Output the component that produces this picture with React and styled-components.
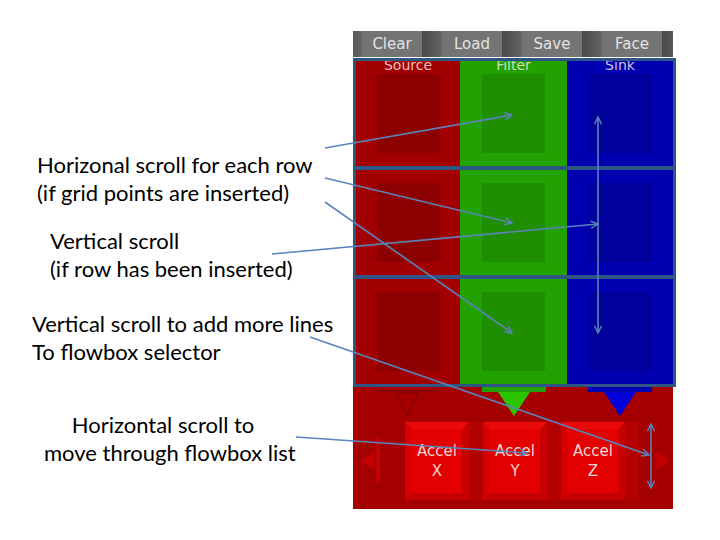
import styled, { createGlobalStyle } from 'styled-components';

const GlobalStyle = createGlobalStyle`
  html, body {
    margin: 0;
    padding: 0;
    background: #ffffff;
  }
`;

const Slide = styled.div`
  position: relative;
  display: flex;
  width: 720px;
  height: 540px;
  overflow: hidden;
  background: #ffffff;
`;

// left column with the callout texts
const Notes = styled.div`
  width: 353px;
  display: flex;
  flex-direction: column;
  font-family: Lato, "Liberation Sans", sans-serif;
  font-size: 22px;
  line-height: 28px;
  color: #000;
`;

const Note = styled.div`
  margin-top: ${({ $top }) => $top}px;
  padding-left: ${({ $left }) => $left || 0}px;
  width: ${({ $width }) => ($width ? `${$width}px` : 'auto')};
  text-align: ${({ $center }) => ($center ? 'center' : 'left')};
  white-space: nowrap;
`;

// the mock device on the right
const Device = styled.div`
  width: 320px;
  padding-top: 31px;
  display: flex;
  flex-direction: column;
  font-family: "DejaVu Sans", sans-serif;
`;

const Toolbar = styled.div`
  display: grid;
  grid-template-columns: repeat(4, 1fr);
  height: 26px;
  background: #6a6a6a;
`;

const ToolButton = styled.div`
  display: flex;
  align-items: stretch;

  &::before {
    content: '';
    width: 9px;
    background: linear-gradient(90deg, #585858, #676767);
  }

  &::after {
    content: '';
    width: 11px;
    background: linear-gradient(90deg, #4a4a4a, #575757);
  }
`;

const ToolFace = styled.span`
  flex: 1;
  display: flex;
  align-items: center;
  justify-content: center;
  background: #747474;
  color: #e2e2e2;
  font-size: 15px;
`;

const Grid = styled.div`
  width: 317px;
  margin-top: 1px;
  border: 3px solid #2e5584;
  background: #2e5584;
  display: flex;
  flex-direction: column;
  gap: 4px;
`;

const Row = styled.div`
  display: grid;
  grid-template-columns: 104px 107px 106px;
  height: 105px;
`;

const palette = {
  red: { bg: '#a20000', inner: '#8c0000', pointer: '#8c0000' },
  green: { bg: '#22a200', inner: '#1f8e00', pointer: '#2bc400' },
  blue: { bg: '#0000b0', inner: '#00009a', pointer: '#0000d8' },
};

const Cell = styled.div`
  position: relative;
  overflow: hidden;
  display: flex;
  justify-content: center;
  padding-top: 13px;
  background: ${({ $tone }) => palette[$tone].bg};
`;

const Slot = styled.div`
  width: 63px;
  height: 79px;
  background: ${({ $tone }) => palette[$tone].inner};
`;

const ColumnLabel = styled.span`
  position: absolute;
  top: -4px;
  left: 0;
  right: 0;
  text-align: center;
  font-size: 14px;
  line-height: 16px;
  color: rgba(255, 235, 235, 0.82);
`;

const Tray = styled.div`
  height: 122px;
  background: #a50000;
  display: flex;
  flex-direction: column;
`;

const Pointers = styled.div`
  display: grid;
  grid-template-columns: 107px 107px 106px;
  height: 34px;
`;

const Pointer = styled.div`
  display: flex;
  justify-content: center;
  svg { display: block; }
`;

const ButtonRow = styled.div`
  display: flex;
  align-items: center;
  height: 80px;
`;

const ScrollArrow = styled.div`
  width: ${({ $w }) => $w}px;
  margin-left: ${({ $ml }) => $ml}px;
  margin-right: ${({ $mr }) => $mr || 0}px;
  display: flex;
  align-items: center;
  svg { display: block; }
`;

const AccelButton = styled.div`
  width: 50px;
  height: 64px;
  margin-right: 14px;
  border: 7px solid;
  border-color: #ea0a0a #c70000 #c40000 #d60000;
  background: #e30000;
  box-shadow: 14px 0 0 #b30000;
  display: flex;
  flex-direction: column;
  align-items: center;
  justify-content: center;
  color: #f4d4d4;
  font-size: 15px;
  line-height: 20px;
`;

const Overlay = styled.svg`
  position: absolute;
  left: 0;
  top: 0;
  pointer-events: none;
`;

const tools = ['Clear', 'Load', 'Save', 'Face'];
const tones = ['red', 'green', 'blue'];
const headers = ['Source', 'Filter', 'Sink'];

const arrows = [
  { d: 'M325 148 L512 115', end: true },
  { d: 'M325 178 L512 223', end: true },
  { d: 'M325 202 L512 333', end: true },
  { d: 'M272 254 L598 224', end: true },
  { d: 'M598 117 L598 333', end: true, start: true },
  { d: 'M310 337 L649 455', end: true },
  { d: 'M651 424 L651 488', end: true, start: true },
  { d: 'M296 437 L527 453', end: true },
];

const PointerIcon = ({ tone }) => {
  if (tone === 'red') {
    return (
      <svg width="64" height="30" viewBox="0 0 64 30">
        <rect x="0" y="3" width="64" height="2" fill="#8a0000" />
        <path d="M21 6 L43 6 L32 28 Z" fill="none" stroke="#8a0000" strokeWidth="1.5" />
      </svg>
    );
  }
  const c = palette[tone];
  return (
    <svg width="64" height="30" viewBox="0 0 64 30">
      <rect x="0" y="0" width="64" height="5" fill={c.bg} />
      <path d="M16 5 L48 5 L32 29 Z" fill={c.pointer} />
    </svg>
  );
};

export default function App() {
  return (
    <Slide>
      <GlobalStyle />
      <Notes>
        <Note $top={151} $left={37}>
          Horizonal scroll for each row
          <br />
          (if grid points are inserted)
        </Note>
        <Note $top={20} $left={50}>
          Vertical scroll
          <br />
          (if row has been inserted)
        </Note>
        <Note $top={27} $left={32}>
          Vertical scroll to add more lines
          <br />
          To flowbox selector
        </Note>
        <Note $top={45} $left={44} $width={238} $center>
          Horizontal scroll to
          <br />
          move through flowbox list
        </Note>
      </Notes>

      <Device>
        <Toolbar>
          {tools.map((t) => (
            <ToolButton key={t}>
              <ToolFace>{t}</ToolFace>
            </ToolButton>
          ))}
        </Toolbar>

        <Grid>
          {[0, 1, 2].map((r) => (
            <Row key={r}>
              {tones.map((tone, i) => (
                <Cell key={tone} $tone={tone}>
                  {r === 0 && <ColumnLabel>{headers[i]}</ColumnLabel>}
                  <Slot $tone={tone} />
                </Cell>
              ))}
            </Row>
          ))}
        </Grid>

        <Tray>
          <Pointers>
            {tones.map((tone) => (
              <Pointer key={tone}>
                <PointerIcon tone={tone} />
              </Pointer>
            ))}
          </Pointers>
          <ButtonRow>
            <ScrollArrow $w={27} $ml={7} $mr={18}>
              <svg width="27" height="48" viewBox="0 0 27 48">
                <path d="M0 24 L14 15 L14 33 Z" fill="#c20000" />
                <rect x="16" y="0" width="4" height="46" fill="#c20000" />
              </svg>
            </ScrollArrow>
            {['X', 'Y', 'Z'].map((axis) => (
              <AccelButton key={axis}>
                <span>Accel</span>
                <span>{axis}</span>
              </AccelButton>
            ))}
            <ScrollArrow $w={16} $ml={15}>
              <svg width="16" height="20" viewBox="0 0 16 20">
                <path d="M16 10 L2 1 L2 19 Z" fill="#c20000" />
              </svg>
            </ScrollArrow>
          </ButtonRow>
        </Tray>
      </Device>

      <Overlay width="720" height="540" viewBox="0 0 720 540">
        <defs>
          <marker id="head" viewBox="0 0 10 10" refX="9" refY="5" markerWidth="9" markerHeight="9" orient="auto-start-reverse" markerUnits="userSpaceOnUse">
            <path d="M1 1 L9 5 L1 9" fill="none" stroke="#5a84bc" strokeWidth="1.6" />
          </marker>
        </defs>
        {arrows.map((a, i) => (
          <path
            key={i}
            d={a.d}
            fill="none"
            stroke="#5a84bc"
            strokeWidth="1.6"
            markerEnd={a.end ? 'url(#head)' : undefined}
            markerStart={a.start ? 'url(#head)' : undefined}
          />
        ))}
      </Overlay>
    </Slide>
  );
}
